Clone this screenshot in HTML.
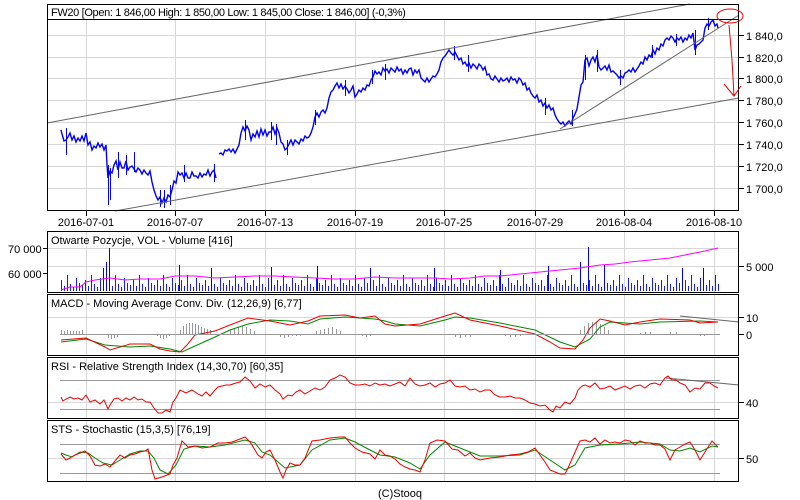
<!DOCTYPE html>
<html><head><meta charset="utf-8"><style>
html,body{margin:0;padding:0;background:#fff;}
svg{display:block;font-family:"Liberation Sans",sans-serif;}
</style></head><body>
<svg width="800" height="500" viewBox="0 0 800 500" xmlns="http://www.w3.org/2000/svg">
<defs>
<pattern id="vb" x="61" y="0" width="24" height="500" patternUnits="userSpaceOnUse">
<path d="M0.5 291V280M3.5 291V286M6.5 291V275M9.5 291V284M12.5 291V287M15.5 291V278M18.5 291V283M21.5 291V285" stroke="#00f"/>
</pattern>
</defs>
<g stroke="#d8d8d8" stroke-width="1" fill="none">
 <path d="M86.5 20V210M175.5 20V210M265.5 20V210M355.5 20V210M444.5 20V210M535.5 20V210M624.5 20V210M714.5 20V210"/>
 <path d="M48 35.5H739M48 57.5H739M48 78.5H739M48 100.5H739M48 122.5H739M48 144.5H739M48 166.5H739M48 188.5H739"/>
 <path d="M86.5 232V292M175.5 232V292M265.5 232V292M355.5 232V292M444.5 232V292M535.5 232V292M624.5 232V292M714.5 232V292M48 248.5H739M48 266.5H739"/>
 <path d="M86.5 295V355M175.5 295V355M265.5 295V355M355.5 295V355M444.5 295V355M535.5 295V355M624.5 295V355M714.5 295V355M48 317.5H739"/>
 <path d="M86.5 358V418M175.5 358V418M265.5 358V418M355.5 358V418M444.5 358V418M535.5 358V418M624.5 358V418M714.5 358V418M48 402.5H739"/>
 <path d="M86.5 421V482M175.5 421V482M265.5 421V482M355.5 421V482M444.5 421V482M535.5 421V482M624.5 421V482M714.5 421V482M48 458.5H739"/>
</g>
<g fill="none" stroke="#00f" stroke-width="1.4">
<polyline points="61,130 62,134 64,141 66,140 68,137 70,133 72,140 74,136 76,142 78,138 80,141 82,136 84,141 86,133 88,145 90,142 92,150 94,146 96,148 98,143 100,147 102,144 104,150 106,145 107,165 108,178 110,171 112,173 114,165 116,161 118,170 120,162 122,168 124,168 126,161 128,170 130,167 132,166 134,169 136,172 138,168 140,170 142,174 144,170 146,173 148,175 150,171 152,182 154,190 156,196 158,200 160,197 162,203 164,198 166,202 168,195 170,197 172,190 174,181 176,183 178,172 180,175 182,173 184,178 186,173 188,178 190,178 192,172 194,176 196,176 198,178 200,173 202,177 204,174 206,175 208,170 210,176 212,172 214,170 216,178"/>
<polyline points="219,154 221,153 223,155 225,150 227,151 229,149 231,152 233,149 235,153 237,149 239,145 241,133 243,127 245,131 247,126 249,130 251,140 253,134 255,137 257,131 259,137 261,129 263,135 265,130 267,136 269,132 271,132 273,127 275,134 277,128 279,133 281,142 283,144 285,150 287,148 289,144 291,140 293,145 295,140 297,142 299,144 301,139 303,141 305,136 307,138 309,137 311,133 313,127 315,117 317,113 319,117 321,112 323,110 325,113 327,108 329,98 331,92 333,90 335,86 337,83 339,88 341,84 343,89 345,86 347,89 349,93 351,90 353,86 355,97 357,94 359,90 361,92 363,88 365,90 367,85 369,86 371,80 373,77 375,71 377,74 379,72 381,75 383,68 385,71 387,69 389,73 391,68 393,70 395,72 397,67 399,71 401,69 403,74 405,70 407,73 409,69 411,68 413,75 415,70 417,73 419,70 421,78 423,80 425,82 427,78 429,82 431,79 433,76 435,77 437,74 439,70 441,62 443,58 445,56 447,53 449,50 451,53 453,55 455,52 457,56 459,60 461,58 463,64 465,62 467,66 469,63 471,68 473,64 475,66 477,69 479,64 481,66 483,70 485,67 487,75 489,74 491,79 493,80 495,76 497,79 499,82 501,78 503,81 505,80 507,78 509,82 511,77 513,80 515,79 517,83 519,78 521,80 523,85 525,83 527,90 529,88 531,93 533,96 535,98 537,95 539,102 541,100 543,106 545,103 547,108 549,105 551,110 553,108 555,115 557,119 559,122 561,124 563,122 565,126 567,123 569,121 571,124 573,118 575,114 577,109 579,97 581,85 583,82 585,60 587,58 589,66 591,60 593,57 595,62 597,55 599,67 601,70 603,68 605,66 607,70 609,65 611,72 613,71 615,73 617,75 619,78 621,76 623,78 625,73 627,72 629,70 631,72 633,68 635,72 637,69 639,66 641,62 643,64 645,57 647,60 649,55 651,57 653,50 655,54 657,48 659,50 661,44 663,46 665,40 667,38 669,40 671,36 673,38 675,42 677,38 679,40 681,37 683,42 685,38 687,40 689,35 691,38 693,33 695,50 697,45 699,44 701,42 703,40 705,28 707,24 709,26 711,22 713,20 715,26 717,24 718,28"/>
</g>
<g fill="none" stroke="#00f" stroke-width="1">
<path d="M66.5 128V155M108.5 165V205M110.5 168V200M118.5 152V178M126.5 155V175M134.5 152V172M160.5 190V207M164.5 190V208M170.5 185V205M184.5 165V182M214.5 164V182M245.5 120V140M271.5 122V140M276.5 124V145M287.5 140V155M315.5 110V125M345.5 80V96M372.5 70V84M385.5 64V80M454.5 46V60M468.5 55V72M545.5 98V115M572.5 110V126M585.5 55V80M597.5 50V72M620.5 70V85M652.5 45V58M676.5 34V46M695.5 30V55M708.5 18V30"/>
</g>
<rect x="61" y="270" width="658" height="22" fill="url(#vb)" opacity="0.9"/>
<path d="M109.5 291V248M106.5 291V262M103.5 291V268M179.5 291V265M211.5 291V268M271.5 291V267M317.5 291V266M370.5 291V268M434.5 291V268M500.5 291V270M548.5 291V266M580.5 291V262M588.5 291V247M604.5 291V265M682.5 291V268M703.5 291V268" stroke="#00f"/>
<polyline fill="none" stroke="#f0f" points="61,290 70,287 80,287 86,282 95,280 110,278 125,280 140,279 160,279 175,276 195,276 215,278 235,277 255,276 275,276 295,277 315,278 335,279 355,279 375,277 395,278 415,278 435,278 450,279 470,278 485,276 500,276 520,274 540,272 560,270 580,268 600,265 615,264 630,262 650,260 670,258 690,254 705,251 718,248"/>
<path d="M61.5 334V330M64.5 334V331M67.5 334V330M70.5 334V331M73.5 334V331M76.5 334V331M79.5 334V331M82.5 334V330M108.5 334V338M111.5 334V339M114.5 334V338M117.5 334V337M157.5 334V336M160.5 334V338M163.5 334V339M166.5 334V338M169.5 334V336M180.5 334V330M183.5 334V326M186.5 334V324M189.5 334V323M192.5 334V323M195.5 334V324M198.5 334V325M201.5 334V327M204.5 334V328M207.5 334V329M210.5 334V330M230.5 334V330M234.5 334V328M238.5 334V327M242.5 334V326M246.5 334V327M250.5 334V329M254.5 334V331M280.5 334V337M284.5 334V338M288.5 334V337M292.5 334V336M296.5 334V336M300.5 334V336M316.5 334V331M320.5 334V330M324.5 334V329M328.5 334V328M332.5 334V327M336.5 334V329M340.5 334V331M362.5 334V336M366.5 334V337M370.5 334V336M455.5 334V337M460.5 334V338M465.5 334V337M470.5 334V337M505.5 334V336M510.5 334V337M515.5 334V337M520.5 334V336M580.5 334V330M584.5 334V326M588.5 334V323M592.5 334V322M596.5 334V322M600.5 334V324M604.5 334V327M608.5 334V330M640.5 334V333M645.5 334V332M650.5 334V332M670.5 334V332M676.5 334V332M700.5 334V336M704.5 334V336" stroke="#999" fill="none"/>
<polyline fill="none" stroke="#080" points="61,342 86,339 105,345 130,347 150,346 170,349 182,352 195,346 215,337 230,330 248,324 270,320 290,321 308,324 320,319 345,317 360,318 375,319 385,321 395,324 420,326 445,320 455,317 470,318 500,323 535,330 560,342 575,347 590,339 600,327 610,322 625,323 640,324 660,322 700,321 718,322"/>
<polyline fill="none" stroke="#e00" points="61,340 86,338 105,347 110,350 130,344 150,344 160,349 170,351 180,352 187,345 195,335 215,331 230,325 248,318 270,321 290,325 308,321 320,316 345,315 360,318 375,316 385,324 395,326 420,324 445,316 455,313 470,320 500,326 535,334 550,342 560,348 575,349 583,340 590,328 600,319 610,321 625,325 640,322 660,319 690,320 700,323 718,322"/>
<g stroke="#999" fill="none">
 <path d="M60 334.5H720M60 380.5H720M60 409.5H720M60 444.5H720M60 473.5H720"/>
</g>
<g stroke="#666" fill="none"><path d="M680 316L739 322M666 378L739 385"/></g>
<polyline fill="none" stroke="#e00" points="61,397 63,401 66,399 70,397 74,399 78,398 82,400 86,395 90,402 95,400 100,404 104,400 108,409 110,405 114,399 118,398 122,401 126,398 130,400 134,397 138,400 142,399 146,402 150,402 154,408 158,413 162,413 166,410 170,412 173,402 176,398 180,390 186,393 192,390 198,394 202,396 206,392 210,396 215,390 218,387 222,386 226,385 230,385 236,383 240,382 245,377 250,381 255,388 260,384 265,387 270,385 275,390 280,394 283,399 288,395 292,396 296,392 300,390 305,394 310,391 315,388 320,390 325,387 330,380 335,378 340,375 345,377 350,383 355,385 360,385 365,384 370,386 375,383 380,385 385,384 390,386 395,384 400,382 405,386 410,378 415,384 420,386 425,385 430,383 435,387 440,384 445,383 450,380 455,386 460,387 465,386 470,390 475,389 480,392 485,390 490,390 495,395 500,397 505,397 510,396 515,398 520,398 525,400 530,403 535,404 540,406 545,405 550,410 553,412 556,406 560,408 565,402 570,404 575,398 578,390 582,386 585,385 590,387 595,383 600,389 605,388 610,386 615,390 620,388 625,386 630,389 635,386 640,385 645,388 650,384 655,383 660,385 665,378 668,376 672,380 676,380 680,383 685,385 690,392 695,388 700,389 705,383 710,383 714,386 718,388"/>
<polyline fill="none" stroke="#080" points="61,453 66,455 72,457 80,452 88,453 95,458 103,463 112,465 120,460 130,454 140,451 148,451 154,458 160,470 168,474 176,465 184,449 195,446 210,447 225,445 245,440 255,443 262,452 270,455 285,468 300,465 312,450 330,440 345,438 355,442 370,450 380,455 395,457 410,463 420,469 430,455 445,442 465,450 480,456 500,456 520,455 535,450 550,460 565,470 575,465 585,448 600,445 620,444 640,442 660,444 670,450 680,451 690,448 700,452 712,446 718,447"/>
<polyline fill="none" stroke="#e00" points="61,454 66,460 70,458 75,455 80,453 85,451 90,456 95,465 100,466 105,464 110,467 115,461 120,455 125,458 130,455 135,454 140,452 145,451 148,449 152,470 155,479 162,477 170,474 173,465 177,458 182,441 188,447 195,446 202,448 210,447 218,443 225,443 232,442 240,439 245,437 250,442 255,450 258,455 262,458 266,452 270,450 275,460 280,472 283,478 286,470 290,463 295,465 300,465 305,458 312,441 320,440 330,438 340,437 345,437 350,443 355,448 362,452 370,454 375,459 380,450 385,455 390,456 395,459 400,464 405,467 410,469 415,470 420,472 425,460 430,443 437,440 445,441 452,449 458,450 465,456 470,453 475,458 480,460 490,458 500,457 510,455 520,454 528,452 535,448 540,455 545,462 550,470 555,472 560,474 565,474 568,468 572,459 576,450 580,441 585,440 590,442 595,438 600,444 605,440 610,443 615,442 620,443 625,440 630,441 635,445 640,441 645,443 650,443 655,445 660,445 665,449 670,460 675,450 680,447 685,444 690,442 695,450 700,460 705,452 710,444 712,441 715,444 718,447"/>
<g stroke="#666" stroke-width="1" fill="none">
 <path d="M47 123L690 4"/>
 <path d="M115 211L739 98"/>
 <path d="M560 129L739 15"/>
</g>
<g fill="none" stroke="#000" stroke-width="1">
 <rect x="47.5" y="4.5" width="691" height="206"/>
 <path d="M47 19.5H739"/>
 <rect x="47.5" y="231.5" width="691" height="61"/>
 <rect x="47.5" y="294.5" width="691" height="61"/>
 <rect x="47.5" y="357.5" width="691" height="61"/>
 <rect x="47.5" y="420.5" width="691" height="61"/>
 <path d="M86.5 211v5M175.5 211v5M265.5 211v5M355.5 211v5M444.5 211v5M535.5 211v5M624.5 211v5M714.5 211v5"/>
 <path d="M739 35.5h5M739 57.5h5M739 78.5h5M739 100.5h5M739 122.5h5M739 144.5h5M739 166.5h5M739 188.5h5M739 266.5h5M739 317.5h5M739 334.5h5M739 402.5h5M739 458.5h5M43 248.5h4M43 273.5h4"/>
</g>
<g fill="none" stroke="#e00" stroke-width="1">
 <ellipse cx="730" cy="16" rx="13" ry="7"/>
 <path d="M729 25L732 60L734 96M724 84L734 96L741 86"/>
</g>
<g font-size="11" fill="#000">
 <text x="51" y="16" letter-spacing="-0.35">FW20 [Open: 1 846,00  High: 1 850,00  Low: 1 845,00  Close: 1 846,00] (-0,3%)</text>
 <text x="51" y="244">Otwarte Pozycje, VOL - Volume [416]</text>
 <text x="51" y="307">MACD - Moving Average Conv. Div. (12,26,9) [6,77]</text>
 <text x="51" y="370">RSI - Relative Strength Index (14,30,70) [60,35]</text>
 <text x="51" y="433">STS - Stochastic (15,3,5) [76,19]</text>
 <g text-anchor="middle">
  <text x="86" y="226">2016-07-01</text><text x="175" y="226">2016-07-07</text><text x="265" y="226">2016-07-13</text><text x="355" y="226">2016-07-19</text><text x="444" y="226">2016-07-25</text><text x="535" y="226">2016-07-29</text><text x="624" y="226">2016-08-04</text><text x="714" y="226">2016-08-10</text>
  <text x="400" y="497">(C)Stooq</text>
 </g>
 <text x="746" y="40">1 840,0</text><text x="746" y="62">1 820,0</text><text x="746" y="83">1 800,0</text><text x="746" y="105">1 780,0</text><text x="746" y="127">1 760,0</text><text x="746" y="149">1 740,0</text><text x="746" y="171">1 720,0</text><text x="746" y="193">1 700,0</text>
 <text x="746" y="271">5 000</text><text x="746" y="322">10</text><text x="746" y="339">0</text><text x="746" y="407">40</text><text x="746" y="463">50</text>
 <text x="8" y="253">70 000</text><text x="8" y="278">60 000</text>
</g>
</svg>
</body></html>
